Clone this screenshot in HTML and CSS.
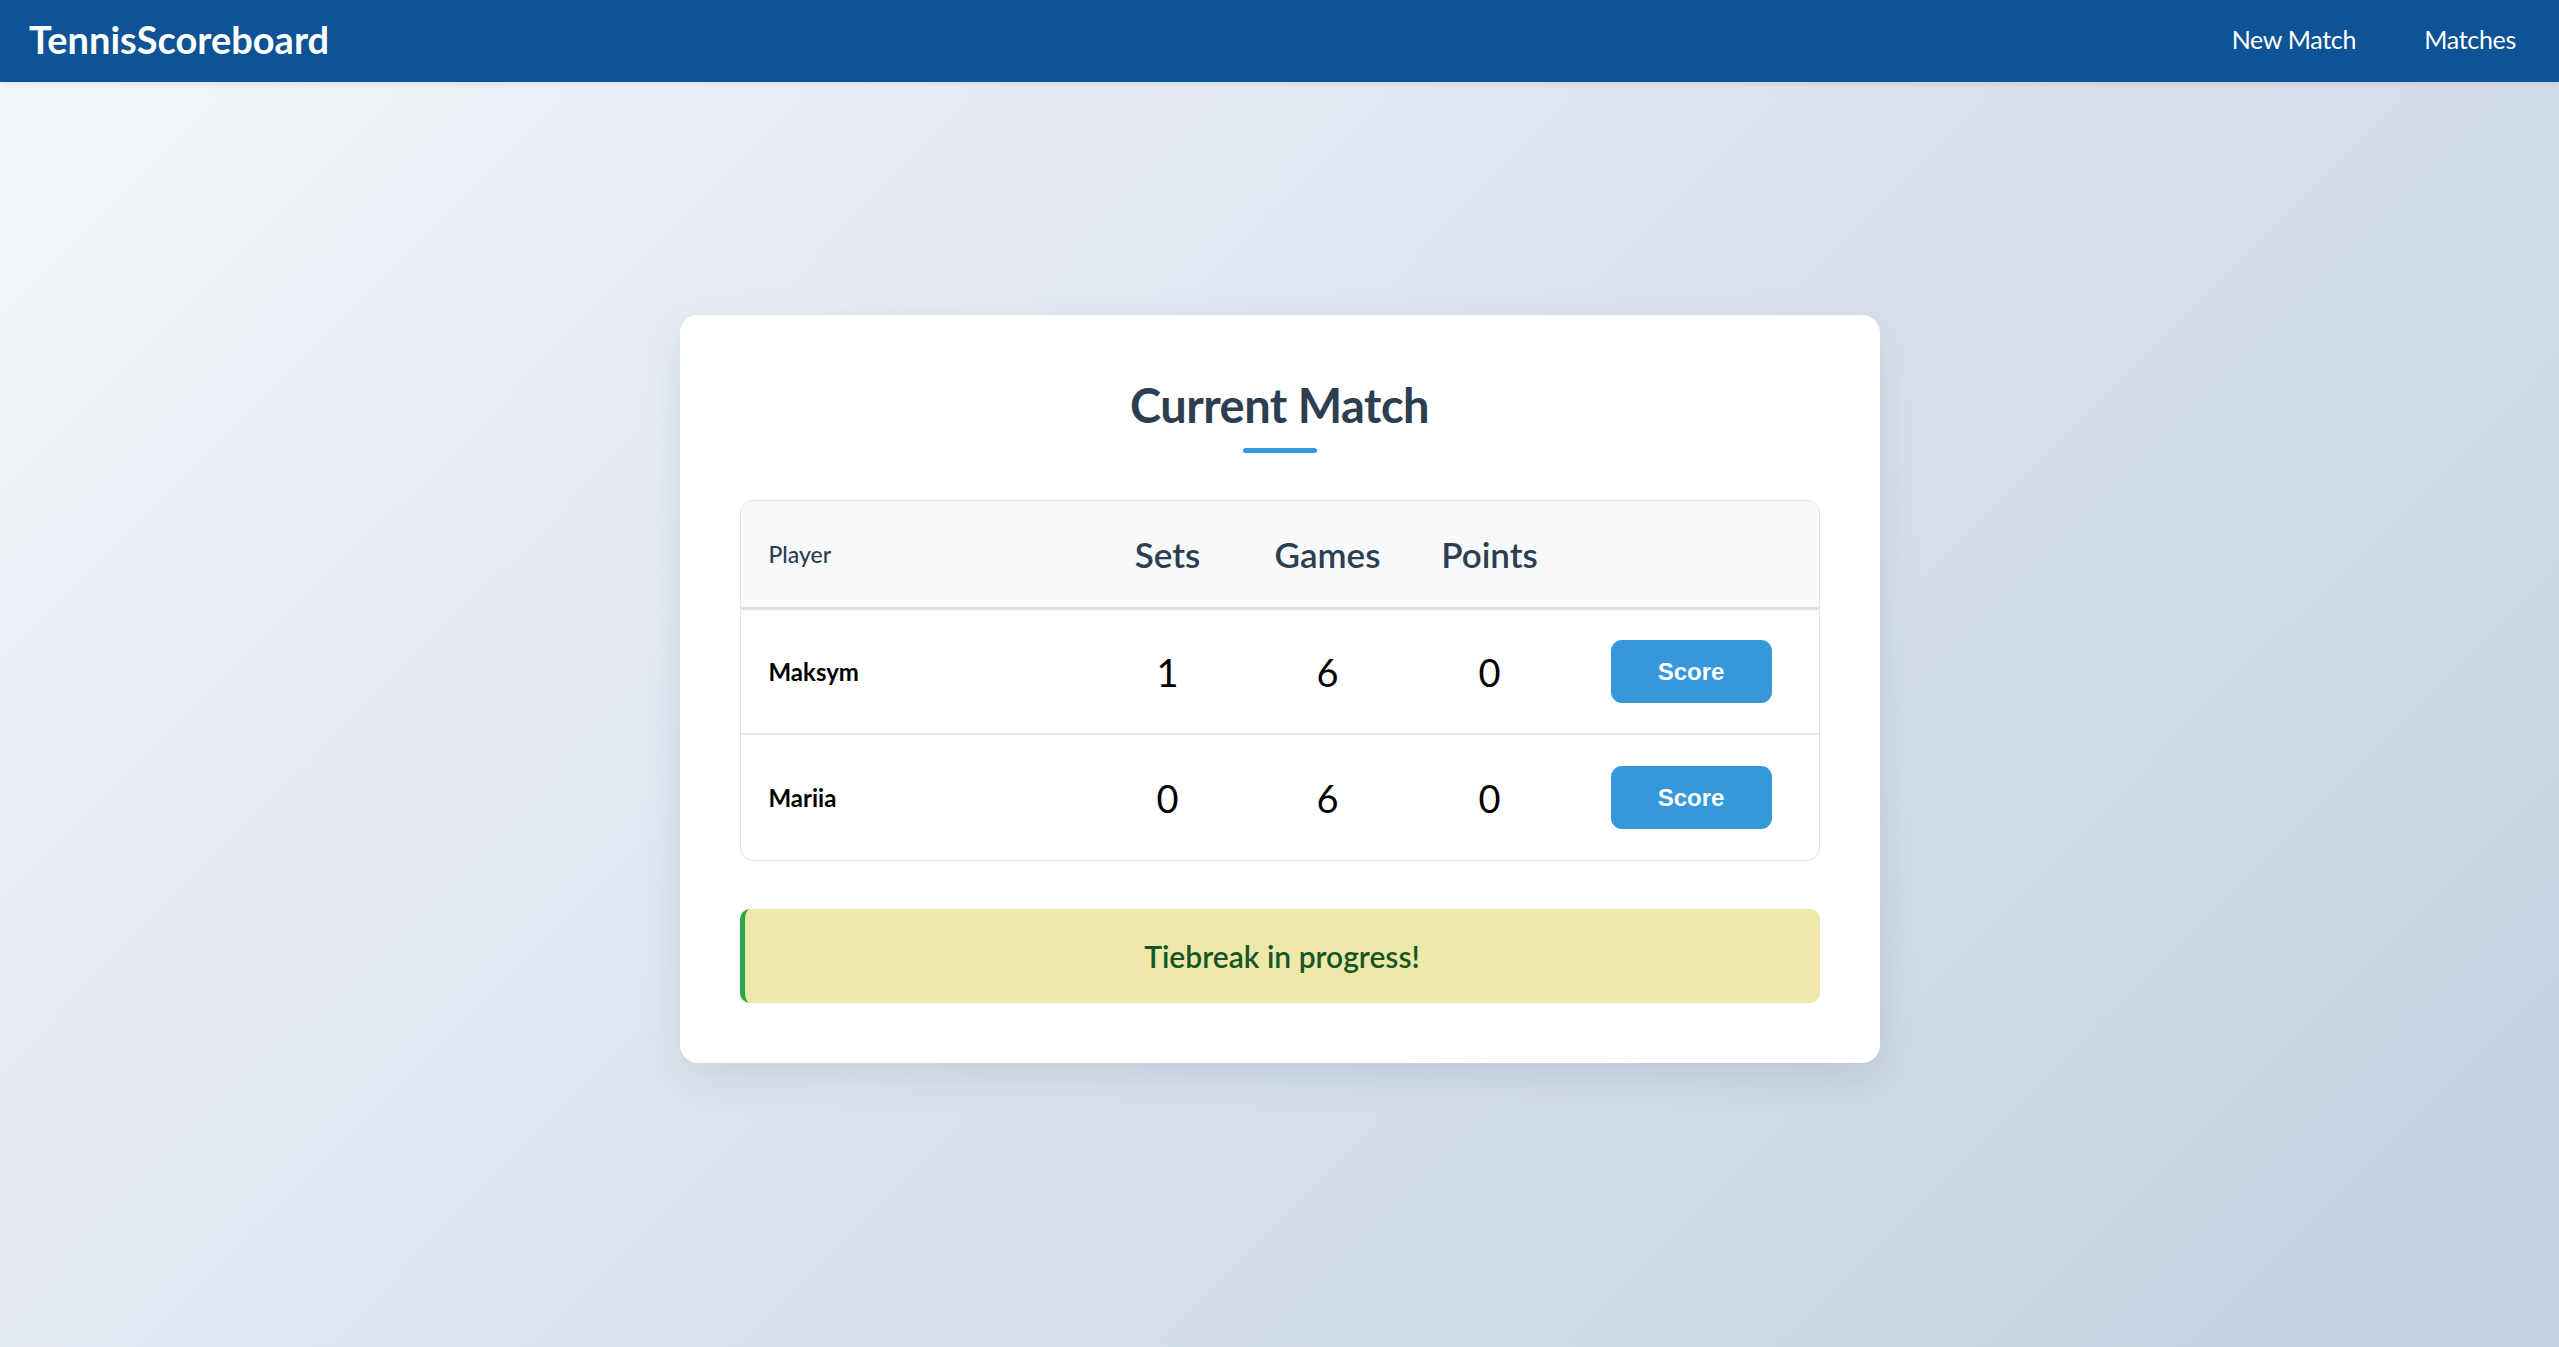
FILE: index.html
```html
<!DOCTYPE html>
<html lang="en">
<head>
<meta charset="utf-8">
<title>TennisScoreboard</title>
<link rel="stylesheet" href="styles.css">
</head>
<body>
<header class="navbar">
  <a class="brand" href="#">TennisScoreboard</a>
  <nav class="nav-links">
    <a href="#">New Match</a>
    <a href="#">Matches</a>
  </nav>
</header>
<main class="main">
  <section class="card">
    <h2 class="title">Current Match</h2>
    <div class="score-table">
      <table>
        <colgroup>
          <col class="c-player"><col class="c-sets"><col class="c-games"><col class="c-points"><col class="c-action">
        </colgroup>
        <thead>
          <tr>
            <th class="th-player">Player</th>
            <th>Sets</th>
            <th>Games</th>
            <th>Points</th>
            <th></th>
          </tr>
        </thead>
        <tbody>
          <tr>
            <td class="name">Maksym</td>
            <td class="num">1</td>
            <td class="num">6</td>
            <td class="num">0</td>
            <td class="action"><button class="btn-score">Score</button></td>
          </tr>
          <tr>
            <td class="name">Mariia</td>
            <td class="num">0</td>
            <td class="num">6</td>
            <td class="num">0</td>
            <td class="action"><button class="btn-score">Score</button></td>
          </tr>
        </tbody>
      </table>
    </div>
    <div class="alert">Tiebreak in progress!</div>
  </section>
</main>
</body>
</html>
```

FILE: styles.css
```css
* { box-sizing: border-box; }
html, body { margin: 0; padding: 0; }
body {
  min-height: 100vh;
  font-family: Lato, "Noto Sans", sans-serif;
  background: linear-gradient(135deg, #f5f7fa 0%, #c3cfe2 100%);
  color: #2c3e50;
}
.navbar {
  height: 82px;
  background: #0d5396;
  display: flex;
  align-items: center;
  justify-content: space-between;
  padding: 0 43px 5px 29px;
  box-shadow: 0 2px 6px rgba(0,0,0,0.08);
}
.brand {
  color: #fff;
  text-decoration: none;
  font-weight: 700;
  font-size: 38px;
  letter-spacing: 0;
}
.nav-links { display: flex; gap: 68px; }
.nav-links a {
  color: #fff;
  text-decoration: none;
  font-size: 25px;
  letter-spacing: -0.3px;
}
.main {
  display: flex;
  justify-content: center;
  padding-top: 233px;
}
.card {
  width: 1200px;
  background: #fff;
  border-radius: 18px;
  padding: 62px 60px 60px;
  box-shadow: 0 14px 40px rgba(44, 62, 80, 0.12);
}
.title {
  margin: 0;
  text-align: center;
  font-size: 47px;
  font-weight: 700;
  color: #2c3e50;
  line-height: 1.2;
  letter-spacing: -0.5px;
  position: relative;
  padding-bottom: 20px;
}
.title::after {
  content: "";
  position: absolute;
  left: 50%;
  bottom: 0;
  width: 74px;
  height: 5px;
  margin-left: -37px;
  background: #3498db;
  border-radius: 3px;
}
.score-table {
  margin-top: 47px;
  border: 1px solid #e1e4e8;
  border-radius: 13px;
  overflow: hidden;
}
table {
  width: 100%;
  border-collapse: collapse;
  table-layout: fixed;
}
.c-player { width: 366px; }
.c-sets { width: 122px; }
.c-games { width: 198px; }
.c-points { width: 126px; }
thead tr {
  background: #f8f9fa;
  border-bottom: 3px solid #dee2e6;
}
th {
  height: 107px;
  font-size: 35px;
  font-weight: 600;
  color: #2c3e50;
  text-align: center;
}
th.th-player {
  text-align: left;
  padding-left: 28px;
  font-size: 23px;
  font-weight: 500;
}
tbody tr { border-bottom: 2px solid #e6e8eb; }
tbody tr:last-child { border-bottom: none; }
td {
  height: 126px;
  text-align: center;
  color: #000;
}
td.name {
  text-align: left;
  padding-left: 28px;
  font-size: 24px;
  font-weight: 700;
}
td.num { font-size: 38px; }
td.action { text-align: right; padding-right: 47px; }
.btn-score {
  width: 161px;
  height: 63px;
  border: none;
  border-radius: 11px;
  background: #3498db;
  color: #fff;
  font-family: "Liberation Sans", Arial, sans-serif;
  font-weight: 700;
  font-size: 24px;
  cursor: pointer;
}
.alert {
  margin-top: 48px;
  height: 94px;
  display: flex;
  align-items: center;
  justify-content: center;
  background: #eee8aa;
  border-left: 5px solid #28a745;
  border-radius: 10px;
  color: #155724;
  font-size: 30px;
  font-weight: 600;
}
```
